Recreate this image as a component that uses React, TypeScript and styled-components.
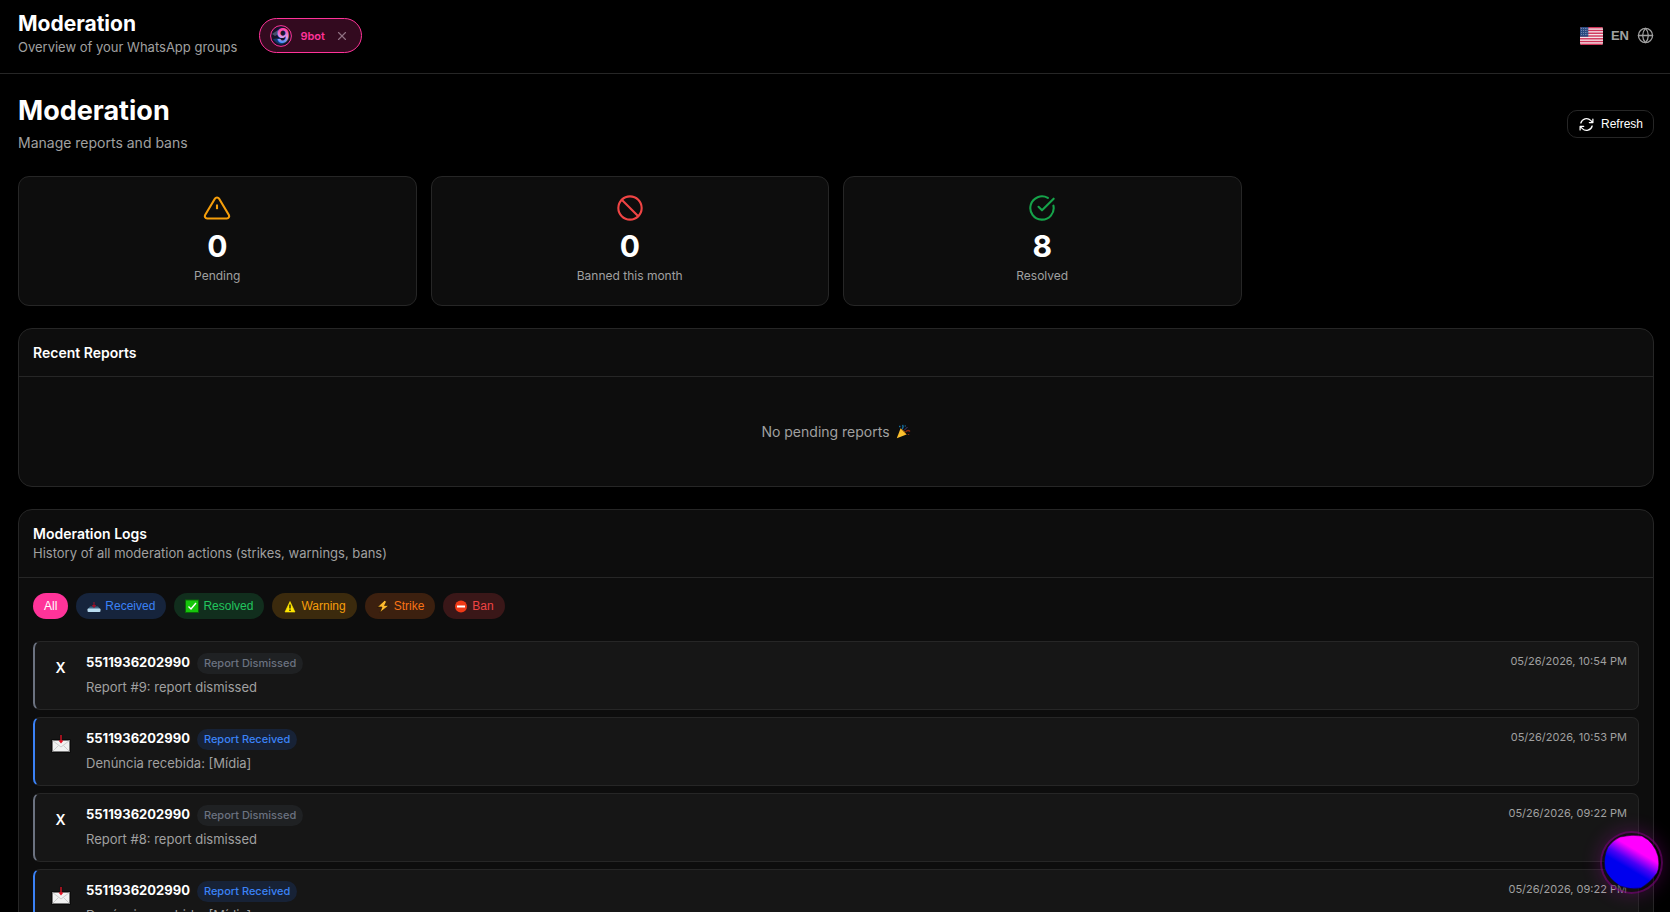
import React, { useState } from "react";
import styled, { createGlobalStyle } from "styled-components";
import { Ban, CircleCheckBig, Globe, X } from "lucide-react";

const GlobalStyle = createGlobalStyle`
  *, *::before, *::after { box-sizing: border-box; }
  html { background: #000; scrollbar-width: none; }
  body {
    margin: 0;
    background: #000;
    color: #fff;
    font-family: Inter, "Liberation Sans", sans-serif;
    font-size: 14px;
  }
  h1, h2, p, ul { margin: 0; padding: 0; }
  button { font-family: "Liberation Sans", Arial, sans-serif; cursor: pointer; }
`;

const TopBar = styled.header`
  display: flex;
  align-items: center;
  min-height: 74px;
  padding: 0 16px 2px 18px;
  border-bottom: 1px solid #262626;
`;

const Brand = styled.div`
  padding-bottom: 3px;
`;

const BrandTitle = styled.p`
  font-size: 21px;
  font-weight: 700;
  line-height: 26px;
`;

const Muted = styled.p<{ $size?: number; $line?: number }>`
  color: #a0a0a0;
  font-size: ${(p) => p.$size ?? 13}px;
  line-height: ${(p) => p.$line ?? 20}px;
`;

const BotChip = styled.div`
  display: flex;
  align-items: center;
  height: 35px;
  margin-left: 22px;
  padding: 0 10px;
  gap: 8px;
  border: 1px solid #ff3399;
  border-radius: 18px;
  background: #330a1f;
  color: #ff3399;
  font-size: 11px;
  font-weight: 600;
`;

const ChipClose = styled.button`
  display: flex;
  align-items: center;
  justify-content: center;
  width: 18px;
  height: 18px;
  padding: 0;
  border: 0;
  background: none;
  color: #8f6f80;
`;

const LanguageButton = styled.button`
  display: flex;
  align-items: center;
  gap: 8px;
  margin-left: auto;
  padding: 0;
  border: 0;
  background: none;
  color: #a0a0a0;
  font-size: 13px;
  font-weight: 700;
`;

const Page = styled.main`
  display: flex;
  flex-direction: column;
  gap: 22px;
  padding: 20px 16px 24px 18px;
`;

const PageHead = styled.div`
  display: flex;
  align-items: center;
  justify-content: space-between;
  min-height: 60px;
`;

const PageTitle = styled.h1`
  font-size: 27px;
  font-weight: 700;
  line-height: 34px;
  margin-bottom: 4px;
`;

const RefreshButton = styled.button`
  display: flex;
  align-items: center;
  gap: 6px;
  height: 28px;
  padding: 0 10px;
  border: 1px solid #262626;
  border-radius: 10px;
  background: #000;
  color: #fff;
  font-size: 12px;
  font-weight: 500;
`;

const StatGrid = styled.section`
  display: grid;
  grid-template-columns: repeat(4, 1fr);
  gap: 14px;
`;

const StatCard = styled.div`
  display: flex;
  flex-direction: column;
  align-items: center;
  padding: 17px 14px 19px;
  border: 1px solid #262626;
  border-radius: 11px;
  background: #0d0d0d;
`;

const StatValue = styled.p`
  margin: 6px 0 2px;
  font-size: 30px;
  font-weight: 700;
  line-height: 36px;
`;

const Panel = styled.section`
  border: 1px solid #262626;
  border-radius: 14px;
  background: #0d0d0d;
`;

const PanelHead = styled.div`
  padding: 14px;
  border-bottom: 1px solid #262626;
`;

const PanelTitle = styled.h2`
  font-size: 14px;
  font-weight: 600;
  line-height: 19px;
`;

const EmptyState = styled.div`
  display: flex;
  align-items: center;
  justify-content: center;
  gap: 6px;
  height: 109px;
`;

const Filters = styled.div`
  display: flex;
  flex-wrap: wrap;
  gap: 8px;
  padding: 15px 14px 0;
`;

const FilterButton = styled.button<{ $fg: string; $bg: string }>`
  display: flex;
  align-items: center;
  gap: 4px;
  height: 26px;
  padding: 0 11px;
  border: 0;
  border-radius: 13px;
  background: ${(p) => p.$bg};
  color: ${(p) => p.$fg};
  font-size: 12px;
`;

const LogList = styled.ul`
  display: flex;
  flex-direction: column;
  gap: 7px;
  padding: 22px 14px 14px;
  list-style: none;
`;

const LogRow = styled.li<{ $accent: string }>`
  display: flex;
  align-items: flex-start;
  gap: 11px;
  padding: 11px 11px 12px;
  border: 1px solid #262626;
  border-left: 2px solid ${(p) => p.$accent};
  border-radius: 7px;
  background: #161616;
`;

const LogIcon = styled.span`
  display: flex;
  align-items: center;
  justify-content: center;
  width: 29px;
  height: 29px;
  font-size: 14px;
  font-weight: 600;
`;

const LogBody = styled.div`
  flex: 1;
  min-width: 0;
`;

const LogHead = styled.div`
  display: flex;
  align-items: flex-start;
  gap: 7px;
  margin-bottom: 3px;
`;

const Phone = styled.span`
  font-size: 13px;
  font-weight: 700;
  line-height: 19px;
`;

const Badge = styled.span<{ $fg: string; $bg: string }>`
  padding: 0 7px;
  border-radius: 11px;
  background: ${(p) => p.$bg};
  color: ${(p) => p.$fg};
  font-size: 11px;
  font-weight: 500;
  line-height: 21px;
`;

const Stamp = styled.time`
  color: #a0a0a0;
  font-size: 11px;
  line-height: 16px;
`;

const Orb = styled.button`
  position: fixed;
  right: 7px;
  bottom: 18px;
  display: flex;
  align-items: center;
  justify-content: center;
  width: 63px;
  height: 63px;
  padding: 0;
  border: 2px solid rgba(190, 0, 190, 0.4);
  border-radius: 50%;
  background: rgba(15, 5, 15, 0.4);
  box-shadow: 0 0 20px rgba(255, 0, 255, 0.2);
`;

const AvatarArt = () => (
  <svg width="22" height="22" viewBox="0 0 22 22" aria-hidden="true">
    <defs>
      <linearGradient id="nine" x1="0" y1="0" x2="0" y2="1">
        <stop offset="0.200" stopColor="#ff3fa6" />
        <stop offset="0.550" stopColor="#d79bea" />
        <stop offset="0.850" stopColor="#1a8cff" />
      </linearGradient>
    </defs>
    <circle cx="11" cy="11" r="10.4" fill="#151329" stroke="#ff3399" strokeWidth="1" />
    <path d="M2 9 L8 5 L9 9 L5 11z" fill="#46506b" />
    <path d="M3 14 L10 13 L14 19 Q8 21 3 14z" fill="#123a6b" />
    <text x="13" y="18" textAnchor="middle" fontFamily="Inter, sans-serif" fontSize="20" fontWeight="700" fill="url(#nine)">9</text>
  </svg>
);

const FlagUS = () => (
  <svg width="23" height="18" viewBox="0 0 23 18" aria-hidden="true">
    <clipPath id="flag"><rect width="23" height="18" rx="2" /></clipPath>
    <g clipPath="url(#flag)">
      <rect width="23" height="18" fill="#f4e4e8" />
      {[0, 1, 2, 3, 4, 5, 6].map((i) => (
        <rect key={i} y={i * 2.77} width="23" height="1.4" fill="#cf3358" />
      ))}
      <rect width="8.300" height="9.700" fill="#2b4a80" />
      {[1.5, 3.5, 5.5, 7.5].map((y) =>
        [1.5, 3.5, 5.5, 7].map((x) => <circle key={`${x}-${y}`} cx={x} cy={y} r="0.45" fill="#b5c3dc" />),
      )}
    </g>
  </svg>
);

const RefreshArrows = () => (
  <svg width="17" height="17" viewBox="0 0 24 24" fill="none" stroke="currentColor" strokeWidth="1.800" strokeLinecap="round" strokeLinejoin="round" aria-hidden="true">
    <path d="M16.023 9.348h4.992v-.001M2.985 19.644v-4.992m0 0h4.992m-4.993 0 3.181 3.183a8.250 8.250 0 0 0 13.803-3.700M4.031 9.865a8.250 8.250 0 0 1 13.803-3.700l3.181 3.182m0-4.991v4.990" />
  </svg>
);

const WarningTriangle = () => (
  <svg width="28" height="28" viewBox="0 0 24 24" fill="none" stroke="#f59e0b" strokeWidth="1.800" strokeLinejoin="round" aria-hidden="true">
    <path d="M10.300 3.900 1.820 18a2 2 0 0 0 1.710 3h16.940a2 2 0 0 0 1.710-3L13.710 3.900a2 2 0 0 0-3.420 0z" />
    <path d="M12 9v4" />
  </svg>
);

const PartyPopper = () => (
  <svg width="15" height="15" viewBox="0 0 15 15" aria-hidden="true">
    <path d="M4.500 4.500 10.500 10.500 0.800 14.200z" fill="#fcc02e" />
    <path d="M4.500 5 Q8 6 10 10.500" stroke="#d98a14" fill="none" />
    <path d="M6 5 Q8 3 6.500 1 M3 2.500h1.500 M9 1.500l.5 1" stroke="#176fa0" fill="none" strokeWidth="1.300" />
    <path d="M9.500 8 Q12 5.500 14 7.500 M12.500 10v1" stroke="#8a2410" fill="none" strokeWidth="1.400" />
    <path d="M8 6.500 11.500 3" stroke="#4a3a70" fill="none" />
  </svg>
);

const InboxTray = () => (
  <svg width="14" height="14" viewBox="0 0 14 14" aria-hidden="true">
    <path d="M3 7.500h8l2.500 3H.5z" fill="#3f6684" />
    <rect x="0.500" y="9.500" width="13" height="3.500" rx="1" fill="#b9dcf0" />
    <path d="M7 3v4 M5.500 6.500 7 8.500 8.500 6.500z" stroke="#a01028" strokeWidth="1" fill="#a01028" />
  </svg>
);

const CheckBox = () => (
  <svg width="14" height="14" viewBox="0 0 14 14" aria-hidden="true">
    <rect x="0.500" y="1" width="13" height="12.500" fill="#16c60c" stroke="#0a6a08" />
    <path d="M3.500 7.500 6 10l5-6" stroke="#fff" strokeWidth="1.400" fill="none" />
  </svg>
);

const WarningSign = () => (
  <svg width="14" height="14" viewBox="0 0 14 14" aria-hidden="true">
    <path d="M7 2.500 12 13H2z" fill="#ffe600" stroke="#ffe600" strokeWidth="0.600" strokeLinejoin="round" />
    <path d="M7 5.500v4 M7 10.500V12" stroke="#111" strokeWidth="1.300" />
  </svg>
);

const Bolt = () => (
  <svg width="14" height="14" viewBox="0 0 14 14" aria-hidden="true">
    <path d="M8.500 1.500 1.500 8h4.500l-2 5.500L12.800 6.500H8.500l2-4z" fill="#fcb92e" stroke="#1c0e02" strokeWidth="0.600" />
  </svg>
);

const NoEntry = () => (
  <svg width="14" height="14" viewBox="0 0 14 14" aria-hidden="true">
    <circle cx="7" cy="7.500" r="6" fill="#f03a17" />
    <rect x="3" y="6.500" width="8" height="2" fill="#fff" />
  </svg>
);

const EnvelopeIn = () => (
  <svg width="20" height="20" viewBox="0 0 20 20" aria-hidden="true">
    <rect x="0.500" y="5.500" width="19" height="13" fill="#000" />
    <rect x="1.500" y="6.500" width="17" height="11" fill="#f2f2f2" />
    <path d="M1.500 6.500 10 13l8.500-6.500 M1.500 17.500l6-6 M18.500 17.500l-6-6" stroke="#c8c8c8" fill="none" strokeWidth="0.900" />
    <path d="M8.500 0.500h3v6h-3z" fill="#111" />
    <path d="M10 1v7" stroke="#e81224" strokeWidth="1.300" />
    <path d="M7.500 6.500h5L10 9.500z" fill="#e81224" />
  </svg>
);

const OrbArt = () => (
  <svg width="55" height="55" viewBox="0 0 55 55" aria-hidden="true">
    <defs>
      <linearGradient id="orb" gradientUnits="userSpaceOnUse" x1="35" y1="17" x2="25" y2="34">
        <stop offset="0" stopColor="#ff00ff" />
        <stop offset="0.600" stopColor="#4a00f5" />
        <stop offset="1" stopColor="#0000ee" />
      </linearGradient>
    </defs>
    <path d="M16 2 Q28-1 38 1 Q50 7 54 21 Q56 32 53 38 Q46 48 37 53 Q26 55 16 51 Q4 43 1 34 Q-1 22 4 12 Q9 5 16 2z" fill="url(#orb)" stroke="#12081a" strokeWidth="0.500" />
  </svg>
);

const filters = [
  { label: "All", fg: "#ffffff", bg: "#ff3399" },
  { label: "Received", fg: "#3b82f6", bg: "#16243c", icon: <InboxTray /> },
  { label: "Resolved", fg: "#22c55e", bg: "#112e1d", icon: <CheckBox /> },
  { label: "Warning", fg: "#f59e0b", bg: "#3b2a0d", icon: <WarningSign /> },
  { label: "Strike", fg: "#f97316", bg: "#3c200f", icon: <Bolt /> },
  { label: "Ban", fg: "#ef4444", bg: "#3a1718", icon: <NoEntry /> },
];

const kinds = {
  dismissed: { label: "Report Dismissed", fg: "#6b7280", bg: "#1f2123", accent: "#6b7280" },
  received: { label: "Report Received", fg: "#3b82f6", bg: "#172236", accent: "#3b82f6" },
};

const logs: { id: number; kind: keyof typeof kinds; text: string; time: string }[] = [
  { id: 1, kind: "dismissed", text: "Report #9: report dismissed", time: "05/26/2026, 10:54 PM" },
  { id: 2, kind: "received", text: "Denúncia recebida: [Mídia]", time: "05/26/2026, 10:53 PM" },
  { id: 3, kind: "dismissed", text: "Report #8: report dismissed", time: "05/26/2026, 09:22 PM" },
  { id: 4, kind: "received", text: "Denúncia recebida: [Mídia]", time: "05/26/2026, 09:22 PM" },
];

export default function App() {
  const [active, setActive] = useState("All");
  return (
    <>
      <GlobalStyle />
      <TopBar>
        <Brand>
          <BrandTitle>Moderation</BrandTitle>
          <Muted>Overview of your WhatsApp groups</Muted>
        </Brand>
        <BotChip>
          <AvatarArt />
          9bot
          <ChipClose aria-label="Remove 9bot"><X size={14} strokeWidth={2} /></ChipClose>
        </BotChip>
        <LanguageButton>
          <FlagUS />
          EN
          <Globe size={17} strokeWidth={1.8} />
        </LanguageButton>
      </TopBar>
      <Page>
        <PageHead>
          <div>
            <PageTitle>Moderation</PageTitle>
            <Muted $size={14} $line={22}>Manage reports and bans</Muted>
          </div>
          <RefreshButton>
            <RefreshArrows />
            Refresh
          </RefreshButton>
        </PageHead>
        <StatGrid>
          <StatCard>
            <WarningTriangle />
            <StatValue>0</StatValue>
            <Muted $size={12}>Pending</Muted>
          </StatCard>
          <StatCard>
            <Ban size={28} strokeWidth={1.8} color="#ef4444" />
            <StatValue>0</StatValue>
            <Muted $size={12}>Banned this month</Muted>
          </StatCard>
          <StatCard>
            <CircleCheckBig size={28} strokeWidth={1.8} color="#16a34a" />
            <StatValue>8</StatValue>
            <Muted $size={12}>Resolved</Muted>
          </StatCard>
        </StatGrid>
        <Panel>
          <PanelHead><PanelTitle>Recent Reports</PanelTitle></PanelHead>
          <EmptyState>
            <Muted $size={14}>No pending reports</Muted>
            <PartyPopper />
          </EmptyState>
        </Panel>
        <Panel>
          <PanelHead>
            <PanelTitle>Moderation Logs</PanelTitle>
            <Muted>History of all moderation actions (strikes, warnings, bans)</Muted>
          </PanelHead>
          <Filters>
            {filters.map((f) => (
              <FilterButton key={f.label} $fg={f.fg} $bg={f.bg} aria-pressed={active === f.label} onClick={() => setActive(f.label)}>
                {f.icon}
                {f.label}
              </FilterButton>
            ))}
          </Filters>
          <LogList>
            {logs.map((log) => {
              const kind = kinds[log.kind];
              return (
                <LogRow key={log.id} $accent={kind.accent}>
                  <LogIcon>{log.kind === "received" ? <EnvelopeIn /> : "X"}</LogIcon>
                  <LogBody>
                    <LogHead>
                      <Phone>5511936202990</Phone>
                      <Badge $fg={kind.fg} $bg={kind.bg}>{kind.label}</Badge>
                    </LogHead>
                    <Muted>{log.text}</Muted>
                  </LogBody>
                  <Stamp>{log.time}</Stamp>
                </LogRow>
              );
            })}
          </LogList>
        </Panel>
      </Page>
      <Orb aria-label="Open assistant"><OrbArt /></Orb>
    </>
  );
}
